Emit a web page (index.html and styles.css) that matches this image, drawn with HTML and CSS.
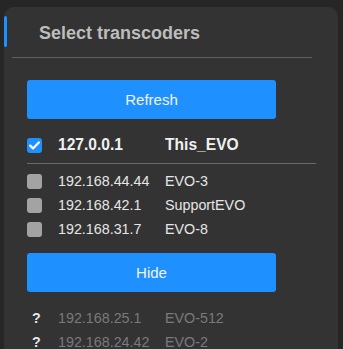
FILE: index.html
```html
<!DOCTYPE html>
<html lang="en">
<head>
    <meta charset="UTF-8">
    <meta name="viewport" content="width=device-width, initial-scale=1.0">
    <title>Select transcoders</title>
    <link rel="stylesheet" href="styles.css">
</head>
<body>
    <div class="panel">
        <div class="panel-header">
            <h1>Select transcoders</h1>
        </div>

        <div class="panel-body">
            <button class="btn">Refresh</button>

            <div class="row row-current">
                <span class="check checked">
                    <svg width="11" height="9" viewBox="0 0 11 9"><path d="M1.2 4.6 L4 7.4 L9.8 1.4" fill="none" stroke="#fff" stroke-width="2.2" stroke-linecap="round" stroke-linejoin="round"/></svg>
                </span>
                <span class="ip">127.0.0.1</span>
                <span class="name">This_EVO</span>
            </div>

            <div class="list">
                <div class="row">
                    <span class="check"></span>
                    <span class="ip">192.168.44.44</span>
                    <span class="name">EVO-3</span>
                </div>
                <div class="row">
                    <span class="check"></span>
                    <span class="ip">192.168.42.1</span>
                    <span class="name">SupportEVO</span>
                </div>
                <div class="row">
                    <span class="check"></span>
                    <span class="ip">192.168.31.7</span>
                    <span class="name">EVO-8</span>
                </div>
            </div>

            <button class="btn btn-hide">Hide</button>

            <div class="list list-unknown">
                <div class="row">
                    <span class="unknown">?</span>
                    <span class="ip">192.168.25.1</span>
                    <span class="name">EVO-512</span>
                </div>
                <div class="row">
                    <span class="unknown">?</span>
                    <span class="ip">192.168.24.42</span>
                    <span class="name">EVO-2</span>
                </div>
            </div>
        </div>
    </div>
</body>
</html>
```

FILE: styles.css
```css
body {
    margin: 0;
    padding: 0;
    background-color: #262626;
    font-family: "Liberation Sans", Arial, sans-serif;
    color: #e6e6e6;
    overflow: hidden;
}

.panel {
    position: relative;
    margin: 7px 5px 0 4px;
    height: 360px;
    background-color: #333;
    border-radius: 10px;
}

.panel::before {
    content: "";
    position: absolute;
    left: 0;
    top: 9px;
    width: 3px;
    height: 31px;
    background-color: #1e90ff;
    border-radius: 2px;
}

.panel-header {
    height: 51px;
    margin: 0 26px 0 8px;
    border-bottom: 1px solid #5e5e5e;
    box-sizing: border-box;
}

.panel-header h1 {
    margin: 0;
    padding: 16px 0 0 27px;
    font-size: 18px;
    font-weight: bold;
    color: #bdbdbd;
}

.panel-body {
    padding: 22px 0 0 23px;
}

.btn {
    display: block;
    width: 249px;
    height: 39px;
    border: none;
    border-radius: 3px;
    background-color: #1e90ff;
    color: #f2f2f2;
    font-family: inherit;
    font-size: 15px;
    cursor: pointer;
}

.btn-hide {
    margin-top: 12px;
}

.row {
    display: grid;
    grid-template-columns: 31px 107px 1fr;
    align-items: center;
    height: 24px;
    font-size: 14.3px;
}

.row-current {
    height: 26px;
    margin: 13px 22px 0 0;
    padding-bottom: 5px;
    border-bottom: 1px solid #6a6a6a;
    font-size: 15.6px;
    font-weight: bold;
    color: #f0f0f0;
}

.list {
    padding-top: 5px;
}

.list-unknown {
    padding-top: 14px;
}

.check {
    display: flex;
    align-items: center;
    justify-content: center;
    width: 15px;
    height: 15px;
    border-radius: 3px;
    background-color: #a3a3a3;
}

.check.checked {
    background-color: #1e90ff;
}

.ip,
.name {
    white-space: nowrap;
}

.unknown {
    padding-left: 5px;
    font-weight: bold;
    color: #e6e6e6;
}

.list-unknown .ip,
.list-unknown .name {
    color: #7a7a7a;
}
```
